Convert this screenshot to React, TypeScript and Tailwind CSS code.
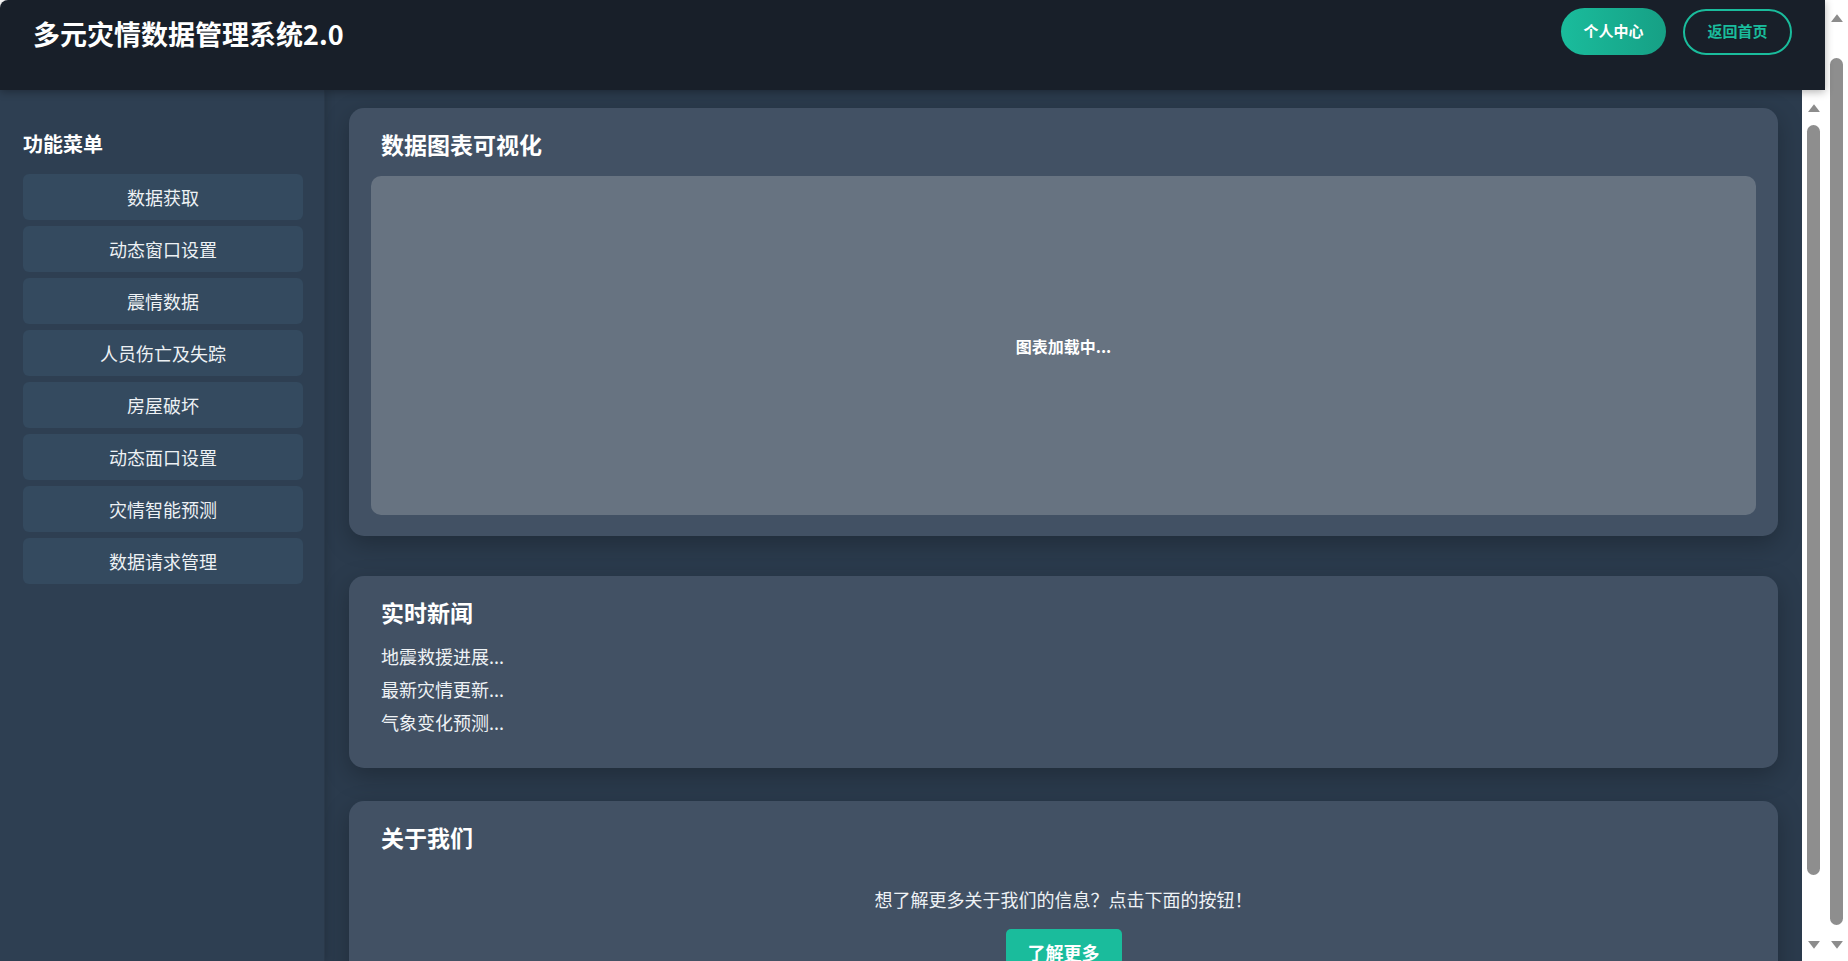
import React from "react";

const MENU = [
  "数据获取",
  "动态窗口设置",
  "震情数据",
  "人员伤亡及失踪",
  "房屋破坏",
  "动态面口设置",
  "灾情智能预测",
  "数据请求管理",
];

const NEWS = ["地震救援进展...", "最新灾情更新...", "气象变化预测..."];

// fake scrollbar arrows (the screenshot shows two of them)
const Arrow = ({ down }: { down?: boolean }) => (
  <svg width="14" height="10" viewBox="0 0 14 10" className={down ? "rotate-180" : ""}>
    <path d="M7 1.2 L12.6 8.4 Q13 9 12.3 9 L1.7 9 Q1 9 1.4 8.4 Z" fill="#8c8c8c" />
  </svg>
);

const ScrollStrip = ({ topPad, thumbTop, thumbHeight }: { topPad: string; thumbTop: string; thumbHeight: string }) => (
  <div className={`flex h-full w-[23px] flex-col items-center bg-white ${topPad}`}>
    <Arrow />
    <div className={`w-[13px] rounded-full bg-[#8e8e8e] ${thumbTop} ${thumbHeight}`} />
    <div className="flex-1" />
    <div className="mb-[11px]">
      <Arrow down />
    </div>
  </div>
);

const Card = ({ title, className, children }: { title: string; className?: string; children: React.ReactNode }) => (
  <section className={`rounded-[15px] bg-[#425164] px-[22px] pt-[20px] shadow-[0_8px_24px_rgba(0,0,0,0.25)] ${className ?? ""}`}>
    <h2 className="px-[10px] text-[23px] font-bold leading-[32px] text-white">{title}</h2>
    {children}
  </section>
);

export default function App() {
  return (
    <div className="flex h-[961px] w-[1848px] overflow-hidden bg-white font-['Noto_Sans_CJK_SC','Noto_Sans',sans-serif]">
      <div className="flex w-[1825px] flex-col">
        <header className="relative z-10 flex h-[90px] shrink-0 items-start justify-between rounded-tl-[8px] bg-[#181f29] px-[33px] shadow-[0_2px_8px_rgba(0,0,0,0.3)]">
          <h1 className="mt-[18px] text-[27px] font-bold leading-[32px] text-white">多元灾情数据管理系统2.0</h1>
          <div className="mt-[8px] flex items-center gap-[17px]">
            <button className="h-[47px] w-[105px] rounded-full bg-gradient-to-r from-[#1abc9c] to-[#16a085] text-[15px] font-bold text-white">
              个人中心
            </button>
            <button className="h-[46px] w-[109px] rounded-full border-2 border-[#1abc9c] bg-transparent text-[15px] font-bold text-[#1abc9c]">
              返回首页
            </button>
          </div>
        </header>

        <div className="flex min-h-0 flex-1">
          <aside className="relative z-[5] w-[325px] shrink-0 border-r border-[#2a394a] bg-[#2e3f52] pl-[23px] pr-[21px] pt-[39px] shadow-[2px_0_8px_rgba(0,0,0,0.15)]">
            <h3 className="mb-[15px] text-[20px] font-bold leading-[30px] text-white">功能菜单</h3>
            <nav className="flex flex-col gap-[6px]">
              {MENU.map((m) => (
                <div
                  key={m}
                  className="flex h-[46px] items-center justify-center rounded-[6px] bg-[#344a5f] text-[18px] text-[#edf1f4]"
                >
                  {m}
                </div>
              ))}
            </nav>
          </aside>

          <main className="min-w-0 flex-1 overflow-hidden bg-[#2b3b4d] px-[24px] pt-[18px]">
            <Card title="数据图表可视化" className="mb-[40px] pb-[21px]">
              <div className="mt-[16px] flex h-[339px] items-center justify-center rounded-[10px] bg-[#677381]">
                <span className="text-[16px] font-bold text-white">图表加载中...</span>
              </div>
            </Card>

            <Card title="实时新闻" className="mb-[33px] pb-[29px]">
              <ul className="mt-[12px] px-[10px]">
                {NEWS.map((n) => (
                  <li key={n} className="py-1 text-[18px] leading-[25px] text-[#eef2f5]">
                    {n}
                  </li>
                ))}
              </ul>
            </Card>

            <Card title="关于我们" className="pb-[22px]">
              <div className="flex flex-col items-center pt-[33px]">
                <p className="mb-[16px] text-[18px] leading-[27px] text-[#eef2f5]">想了解更多关于我们的信息？点击下面的按钮！</p>
                <button className="rounded-[5px] bg-[#1abc9c] px-[22px] py-[10px] text-[18px] font-bold leading-[27px] text-white">
                  了解更多
                </button>
              </div>
            </Card>
          </main>

          <ScrollStrip topPad="pt-[13px]" thumbTop="mt-[12px]" thumbHeight="h-[750px]" />
        </div>
      </div>

      <ScrollStrip topPad="pt-[13px]" thumbTop="mt-[35px]" thumbHeight="h-[867px]" />
    </div>
  );
}
